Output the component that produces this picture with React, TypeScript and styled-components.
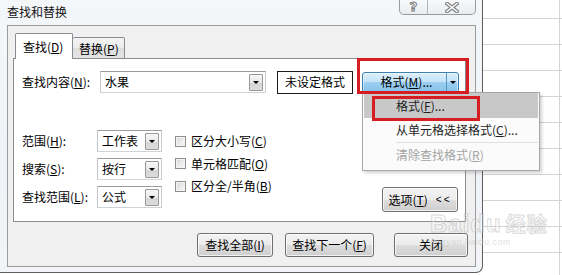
import React from "react";
import styled, { createGlobalStyle } from "styled-components";

const Global = createGlobalStyle`
  html, body { margin: 0; padding: 0; background: #fff; }
  body {
    width: 562px; height: 275px; overflow: hidden;
    font-family: "Noto Sans CJK SC", "Microsoft YaHei", sans-serif;
    font-size: 12px; color: #000;
  }
  u { text-underline-offset: 1px; }
`;

const Screen = styled.div`
  position: relative;
  display: flex;
  width: 562px;
  height: 275px;
  overflow: hidden;
`;

const Window = styled.div`
  box-sizing: border-box;
  width: 483px;
  height: 273px;
  flex: none;
  display: flex;
  flex-direction: column;
  padding: 0 6px 5px 7px;
  border-right: 1px solid #5e5e5e;
  border-bottom: 1px solid #5e5e5e;
  border-bottom-right-radius: 7px;
  background: linear-gradient(180deg, #f4f7fa 0%, #eff3f7 60%, #f2f4f7 100%);
`;

const TitleBar = styled.div`
  height: 25px;
  display: flex;
  justify-content: space-between;
  align-items: flex-start;
`;

const Title = styled.div`
  padding-top: 3px;
  font-size: 12px;
  line-height: 18px;
  color: #111;
`;

const Caption = styled.div`
  display: flex;
  height: 15px;
  box-sizing: border-box;
  border: 1px solid #9a9a9a;
  border-top: none;
  border-radius: 0 0 5px 5px;
  background: linear-gradient(180deg, #f7f9fb, #e9edf1);
  overflow: hidden;
`;

const CaptionBtn = styled.div<{ $w: number; $divider?: boolean }>`
  width: ${(p) => p.$w}px;
  display: flex;
  align-items: center;
  justify-content: center;
  border-right: ${(p) => (p.$divider ? "1px solid #b4b4b4" : "none")};
`;

const HelpGlyph = styled.span`
  font-family: "DejaVu Sans", sans-serif;
  font-weight: bold;
  font-size: 13px;
  line-height: 14px;
  color: #fff;
  -webkit-text-stroke: 1px #7a7a7a;
`;

const Panel = styled.div`
  flex: 1;
  box-sizing: border-box;
  border: 1px solid #9c9c9c;
  background: #f0f0f0;
  display: flex;
  flex-direction: column;
  padding: 7px 9px 0 5px;
`;

const TabRow = styled.div`
  display: flex;
  align-items: flex-end;
  padding-left: 2px;
  margin-bottom: -1px;
  position: relative;
  z-index: 1;
`;

const Tab = styled.div<{ $active?: boolean }>`
  box-sizing: border-box;
  height: ${(p) => (p.$active ? 26 : 22)}px;
  width: ${(p) => (p.$active ? 58 : 52)}px;
  padding-left: ${(p) => (p.$active ? 7 : 6)}px;
  border: 1px solid #898c95;
  border-left: ${(p) => (p.$active ? "1px solid #898c95" : "none")};
  border-bottom: ${(p) => (p.$active ? "none" : "1px solid #898c95")};
  border-radius: 2px 2px 0 0;
  background: ${(p) =>
    p.$active ? "#fff" : "linear-gradient(180deg, #f3f3f3 0%, #ebebeb 50%, #dedede 51%, #e4e4e4 100%)"};
  display: flex;
  align-items: center;
  line-height: 16px;
  padding-top: ${(p) => (p.$active ? 0 : 1)}px;
`;

const Content = styled.div`
  box-sizing: border-box;
  width: 453px;
  height: 164px;
  border: 1px solid #898c95;
  background: #fff;
  display: flex;
  flex-direction: column;
  padding: 12px 7px 9px 8px;
`;

const FindRow = styled.div`
  display: flex;
  align-items: center;
  height: 22px;
  & > * { flex: none; }
`;

const Label = styled.div<{ $w: number }>`
  width: ${(p) => p.$w}px;
  flex: none;
  line-height: 16px;
  white-space: nowrap;
`;

const Combo = styled.div<{ $w: number }>`
  box-sizing: border-box;
  width: ${(p) => p.$w}px;
  height: 22px;
  border: 1px solid #a6a6a6;
  border-color: #9c9c9c #c9cdd3 #d0d4da #c4c8ce;
  background: #fff;
  display: flex;
  align-items: center;
  justify-content: space-between;
  padding: 0 2px 0 4px;
  line-height: 16px;
`;

const ArrowBtn = styled.div`
  box-sizing: border-box;
  width: 14px;
  height: 17px;
  border: 1px solid #9a9a9a;
  border-radius: 1px;
  background: linear-gradient(180deg, #f6f6f6 0%, #e8e8e8 50%, #d6d6d6 51%, #dcdcdc 100%);
  display: flex;
  align-items: center;
  justify-content: center;
`;

const Tri = styled.div`
  width: 0;
  height: 0;
  border-left: 3px solid transparent;
  border-right: 3px solid transparent;
  border-top: 3px solid #000;
`;

const Preview = styled.div`
  box-sizing: border-box;
  width: 76px;
  height: 23px;
  margin-left: 11px;
  border: 1px solid #1a1a1a;
  display: flex;
  align-items: center;
  justify-content: center;
  line-height: 16px;
  white-space: nowrap;
`;

const FormatBtn = styled.div`
  box-sizing: border-box;
  width: 97px;
  height: 21px;
  margin-left: 9px;
  border: 1px solid #3c7fb1;
  border-radius: 3px;
  background: linear-gradient(180deg, #dceffc 0%, #c4e3f8 45%, #9ccff1 50%, #86c1ea 100%);
  box-shadow: inset 0 0 0 1px rgba(255, 255, 255, 0.5);
  display: flex;
  align-items: stretch;
`;

const FormatMain = styled.div`
  flex: 1;
  display: flex;
  align-items: center;
  justify-content: center;
  line-height: 16px;
  padding-left: 4px;
  white-space: nowrap;
`;

const FormatArrow = styled.div`
  width: 11px;
  border-left: 1px solid #5a95c1;
  display: flex;
  align-items: center;
  justify-content: center;
`;

const Lower = styled.div`
  flex: 1;
  display: flex;
  margin-top: 37px;
`;

const OptGrid = styled.div`
  display: grid;
  grid-template-columns: 75px 65px;
  grid-auto-rows: 22px;
  row-gap: 6px;
  align-items: center;
`;

const Checks = styled.div`
  margin-left: 13px;
  display: flex;
  flex-direction: column;
`;

const CheckRow = styled.label`
  display: flex;
  align-items: center;
  height: 22.5px;
  gap: 5px;
  line-height: 16px;
  white-space: nowrap;
`;

const Box = styled.span`
  box-sizing: border-box;
  width: 11px;
  height: 11px;
  border: 1px solid #8e8f8f;
  background: linear-gradient(135deg, #d6d6d6 0%, #ebebeb 55%, #fbfbfb 100%);
  box-shadow: inset 0 0 0 1px #f4f4f4;
`;

const Spacer = styled.div`
  flex: 1;
`;

const Button = styled.div<{ $w: number; $ml?: number }>`
  box-sizing: border-box;
  width: ${(p) => p.$w}px;
  height: 24px;
  margin-left: ${(p) => p.$ml ?? 0}px;
  border: 1px solid #707070;
  border-radius: 3px;
  background: linear-gradient(180deg, #f3f3f3 0%, #ebebeb 50%, #dddddd 51%, #cfcfcf 100%);
  box-shadow: inset 0 0 0 1px rgba(255, 255, 255, 0.7);
  display: flex;
  align-items: center;
  justify-content: center;
  line-height: 16px;
  white-space: nowrap;
`;

const OptionsButton = styled(Button)`
  align-self: flex-end;
  height: 25px;
  gap: 8px;
`;

const Chevrons = styled.span`
  font-family: "Liberation Sans", sans-serif;
  font-size: 10px;
  letter-spacing: 2px;
`;

const ButtonRow = styled.div`
  display: flex;
  justify-content: flex-end;
  margin-top: 11px;
  margin-right: -2px;
  gap: 12px;
`;

const Excel = styled.div`
  flex: 1;
  height: 275px;
  background-color: #fff;
  background-image: linear-gradient(to bottom, #d4d4d4 1px, transparent 1px),
    linear-gradient(to right, #d4d4d4 1px, transparent 1px);
  background-size: 100% 26px, 100% 100%;
  background-position: 0 18px, 76px 0;
  background-repeat: repeat-y, no-repeat;
`;

const Menu = styled.div`
  position: absolute;
  left: 362px;
  top: 92px;
  width: 178px;
  box-sizing: border-box;
  border: 1px solid #a7a7a7;
  background: #fbfbfb;
  box-shadow: 2px 2px 3px rgba(0, 0, 0, 0.18);
  padding: 0 1px 3px 1px;
  display: flex;
  flex-direction: column;
`;

const MenuItem = styled.div<{ $hot?: boolean; $disabled?: boolean }>`
  height: ${(p) => (p.$hot ? 25 : 24)}px;
  display: flex;
  align-items: center;
  padding-left: 32px;
  line-height: 16px;
  background: ${(p) => (p.$hot ? "#c8c8c8" : "transparent")};
  color: ${(p) => (p.$disabled ? "#a3a3a3" : "#1e1e1e")};
`;

const MenuSep = styled.div`
  height: 1px;
  margin-left: 32px;
  background: #e0e0e0;
`;

const RedBox = styled.div<{ $l: number; $t: number; $w: number; $h: number }>`
  position: absolute;
  left: ${(p) => p.$l}px;
  top: ${(p) => p.$t}px;
  width: ${(p) => p.$w}px;
  height: ${(p) => p.$h}px;
  box-sizing: border-box;
  border: 3px solid #d51d22;
  pointer-events: none;
`;

const Watermark = styled.div`
  position: absolute;
  left: 430px;
  top: 212px;
  display: flex;
  flex-direction: column;
  align-items: flex-start;
  pointer-events: none;
  opacity: 0.5;
`;

const WmMain = styled.div`
  font-family: "Liberation Sans", sans-serif;
  font-weight: bold;
  font-size: 24px;
  line-height: 24px;
  color: rgba(255, 255, 255, 0.6);
  -webkit-text-stroke: 1px #b9b9b9;
  letter-spacing: 1px;
`;

const WmCn = styled.span`
  font-family: "Noto Sans CJK SC", sans-serif;
  font-size: 20px;
  margin-left: 4px;
`;

const WmSub = styled.div`
  font-family: "Liberation Sans", sans-serif;
  font-size: 9px;
  color: #c4c4c4;
  margin-top: 1px;
  letter-spacing: 0.5px;
`;

function CloseGlyph() {
  return (
    <svg width="14" height="11" viewBox="0 0 14 11">
      <path d="M2 1.5 L12 9.5 M12 1.5 L2 9.5" stroke="#7a7a7a" strokeWidth="3.6" strokeLinecap="square" fill="none" />
      <path d="M2 1.5 L12 9.5 M12 1.5 L2 9.5" stroke="#ffffff" strokeWidth="1.6" strokeLinecap="square" fill="none" />
    </svg>
  );
}

function SmallCombo({ value }: { value: string }) {
  return (
    <Combo $w={65}>
      <span>{value}</span>
      <ArrowBtn>
        <Tri />
      </ArrowBtn>
    </Combo>
  );
}

function Check({ label, k }: { label: string; k: string }) {
  return (
    <CheckRow>
      <Box />
      <span>
        {label}(<u>{k}</u>)
      </span>
    </CheckRow>
  );
}

export default function App() {
  return (
    <>
      <Global />
      <Screen>
        <Window>
          <TitleBar>
            <Title>查找和替换</Title>
            <Caption>
              <CaptionBtn $w={27} $divider>
                <HelpGlyph>?</HelpGlyph>
              </CaptionBtn>
              <CaptionBtn $w={47}>
                <CloseGlyph />
              </CaptionBtn>
            </Caption>
          </TitleBar>
          <Panel>
            <TabRow>
              <Tab $active>
                <span>
                  查找(<u>D</u>)
                </span>
              </Tab>
              <Tab>
                <span>
                  替换(<u>P</u>)
                </span>
              </Tab>
            </TabRow>
            <Content>
              <FindRow>
                <Label $w={78}>
                  查找内容(<u>N</u>):
                </Label>
                <Combo $w={166}>
                  <span>水果</span>
                  <ArrowBtn>
                    <Tri />
                  </ArrowBtn>
                </Combo>
                <Preview>未设定格式</Preview>
                <FormatBtn>
                  <FormatMain>
                    <span>
                      格式(<u>M</u>)...
                    </span>
                  </FormatMain>
                  <FormatArrow>
                    <Tri />
                  </FormatArrow>
                </FormatBtn>
              </FindRow>
              <Lower>
                <OptGrid>
                  <Label $w={75}>
                    范围(<u>H</u>):
                  </Label>
                  <SmallCombo value="工作表" />
                  <Label $w={75}>
                    搜索(<u>S</u>):
                  </Label>
                  <SmallCombo value="按行" />
                  <Label $w={75}>
                    查找范围(<u>L</u>):
                  </Label>
                  <SmallCombo value="公式" />
                </OptGrid>
                <Checks>
                  <Check label="区分大小写" k="C" />
                  <Check label="单元格匹配" k="O" />
                  <Check label="区分全/半角" k="B" />
                </Checks>
                <Spacer />
                <OptionsButton $w={76}>
                  <span>
                    选项(<u>T</u>)
                  </span>
                  <Chevrons>&lt;&lt;</Chevrons>
                </OptionsButton>
              </Lower>
            </Content>
            <ButtonRow>
              <Button $w={76}>
                <span>
                  查找全部(<u>I</u>)
                </span>
              </Button>
              <Button $w={89}>
                <span>
                  查找下一个(<u>F</u>)
                </span>
              </Button>
              <Button $w={74} $ml={8}>
                关闭
              </Button>
            </ButtonRow>
          </Panel>
        </Window>
        <Excel />
        <Menu>
          <MenuItem $hot>
            <span>
              格式(<u>F</u>)...
            </span>
          </MenuItem>
          <MenuItem>
            <span>
              从单元格选择格式(<u>C</u>)...
            </span>
          </MenuItem>
          <MenuSep />
          <MenuItem $disabled>
            <span>
              清除查找格式(<u>R</u>)
            </span>
          </MenuItem>
        </Menu>
        <RedBox $l={357} $t={58} $w={112} $h={36} />
        <RedBox $l={372} $t={96} $w={108} $h={25} />
        <Watermark>
          <WmMain>
            Baidu<WmCn>经验</WmCn>
          </WmMain>
          <WmSub>jingyan.baidu.com</WmSub>
        </Watermark>
      </Screen>
    </>
  );
}
